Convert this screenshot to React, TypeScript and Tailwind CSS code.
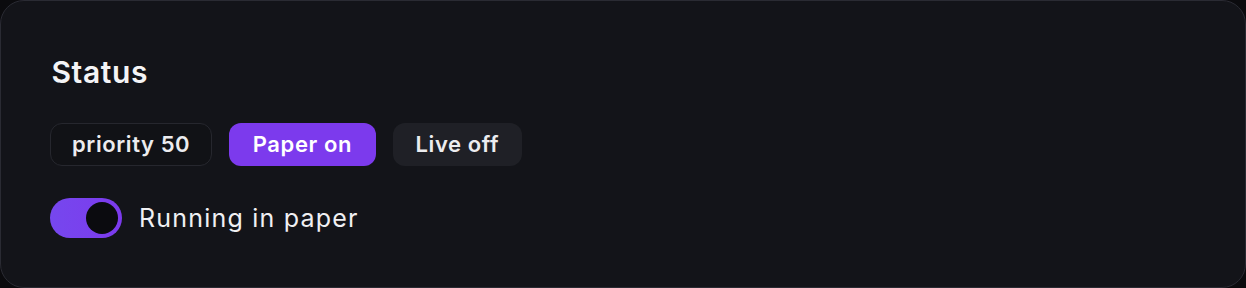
export default function App() {
  return (
    <div className="w-[1246px] h-[288px] bg-[#0b0b0e]" style={{ fontFamily: 'Inter, "Noto Sans", sans-serif' }}>
      <div className="h-full rounded-[24px] border-[1.5px] border-[#2a2b33] bg-[#131419] px-[49px] pt-[50px]">
        <h2 className="pl-[1.5px] text-[30px] leading-[42px] font-semibold text-[#f4f4f6] tracking-[0.6px]">Status</h2>
        <div className="mt-[30px] flex items-center gap-[17px]">
          <span className="h-[43px] px-[21px] flex items-center rounded-[12px] border-[1.5px] border-[#26272e] bg-[#111216] text-[22px] tracking-[0.6px] font-semibold text-[#ececef]">
            priority 50
          </span>
          <span className="h-[43px] px-[23.5px] flex items-center rounded-[12px] bg-[#7c3aed] text-[22px] tracking-[0.6px] font-semibold text-white">
            Paper on
          </span>
          <span className="h-[43px] px-[23px] flex items-center rounded-[12px] bg-[#1f2026] text-[22px] tracking-[0.6px] font-semibold text-[#ececef]">
            Live off
          </span>
        </div>
        <div className="mt-[32px] flex items-center gap-[17px]">
          <button className="relative w-[72px] h-[40px] rounded-full bg-gradient-to-r from-[#7647ee] to-[#7c3aed]">
            <span className="absolute right-[4px] top-[4px] w-[32px] h-[32px] rounded-full bg-[#0b0b0f]" />
          </button>
          <span className="text-[25px] leading-[36px] tracking-[1.2px] text-[#f0f0f3]">Running in paper</span>
        </div>
      </div>
    </div>
  );
}
